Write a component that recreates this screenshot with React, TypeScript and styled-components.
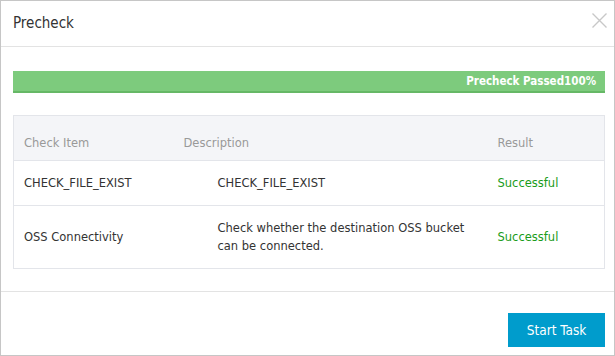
import styled, { createGlobalStyle } from "styled-components";

const GlobalStyle = createGlobalStyle`
  html, body {
    margin: 0;
    padding: 0;
    background: #fff;
  }
  body {
    font-family: "DejaVu Sans", sans-serif;
    color: #333;
  }
`;

type Row = {
  item: string;
  description: string;
  result: string;
};

const rows: Row[] = [
  { item: "CHECK_FILE_EXIST", description: "CHECK_FILE_EXIST", result: "Successful" },
  {
    item: "OSS Connectivity",
    description: "Check whether the destination OSS bucket can be connected.",
    result: "Successful",
  },
];

export default function App() {
  return (
    <>
      <GlobalStyle />
      <Dialog>
        <Header>
          <Title>Precheck</Title>
          <Close aria-label="close">
            <svg width="15" height="15" viewBox="0 0 15 15">
              <path d="M0.5 0.5 L14.5 14.5 M14.5 0.5 L0.5 14.5" stroke="#c8c8c8" strokeWidth="1.4" fill="none" />
            </svg>
          </Close>
        </Header>
        <Body>
          <Progress>
            <ProgressFill $percent={100}>Precheck Passed100%</ProgressFill>
          </Progress>
          <Table>
            <colgroup>
              <col style={{ width: 160 }} />
              <col style={{ width: 314 }} />
              <col />
            </colgroup>
            <thead>
              <tr>
                <Th>Check Item</Th>
                <Th>Description</Th>
                <Th>Result</Th>
              </tr>
            </thead>
            <tbody>
              {rows.map((r) => (
                <tr key={r.item}>
                  <Td>{r.item}</Td>
                  <DescCell>{r.description}</DescCell>
                  <ResultCell>{r.result}</ResultCell>
                </tr>
              ))}
            </tbody>
          </Table>
        </Body>
        <Footer>
          <PrimaryButton>Start Task</PrimaryButton>
        </Footer>
      </Dialog>
    </>
  );
}

const Dialog = styled.div`
  width: 615px;
  height: 356px;
  box-sizing: border-box;
  border: 1px solid #c6c6c6;
  background: #fff;
  display: flex;
  flex-direction: column;
`;

const Header = styled.div`
  height: 46px;
  box-sizing: border-box;
  border-bottom: 1px solid #e3e3e3;
  display: flex;
  align-items: center;
  justify-content: space-between;
  padding: 0 7px 2px 12px;
`;

const Title = styled.h2`
  margin: 0;
  font-family: "DejaVu Sans Condensed", "DejaVu Sans", sans-serif;
  font-size: 15px;
  font-weight: normal;
  color: #333;
`;

const Close = styled.button`
  border: 0;
  background: none;
  padding: 0;
  margin-bottom: 4px;
  display: flex;
  cursor: pointer;
`;

const Body = styled.div`
  padding: 24px 9px 22px 12px;
  border-bottom: 1px solid #e3e3e3;
`;

const Progress = styled.div`
  height: 22px;
  background: #e8e8e8;
`;

const ProgressFill = styled.div<{ $percent: number }>`
  width: ${(p) => p.$percent}%;
  height: 100%;
  box-sizing: border-box;
  background: #7dcb7d;
  border-bottom: 2px solid #66b866;
  color: #fff;
  font-family: "DejaVu Sans Condensed", "DejaVu Sans", sans-serif;
  font-size: 11.5px;
  font-weight: bold;
  text-align: right;
  padding-right: 9px;
  line-height: 21px;
`;

const Table = styled.table`
  margin-top: 22px;
  width: 100%;
  border-collapse: collapse;
  table-layout: fixed;
  border: 1px solid #e3e5ea;
  font-size: 11.5px;
`;

const Th = styled.th`
  background: #f4f5f8;
  color: #999;
  font-weight: normal;
  text-align: left;
  line-height: 18px;
  padding: 18px 10px 8px;
  border-bottom: 1px solid #e3e5ea;
`;

const Td = styled.td`
  padding: 13px 10px;
  color: #333;
  line-height: 18px;
  border-bottom: 1px solid #e3e5ea;
`;

const DescCell = styled(Td)`
  padding-left: 44px;
  padding-right: 20px;
`;

const ResultCell = styled(Td)`
  color: #1a9c1a;
`;

const Footer = styled.div`
  flex: 1;
  display: flex;
  justify-content: flex-end;
  align-items: flex-start;
  padding: 21px 9px 0;
`;

const PrimaryButton = styled.button`
  width: 97px;
  height: 34px;
  border: 0;
  background: #009ccc;
  color: #fff;
  font-family: "DejaVu Sans Condensed", "DejaVu Sans", sans-serif;
  font-size: 13.5px;
  cursor: pointer;
`;
